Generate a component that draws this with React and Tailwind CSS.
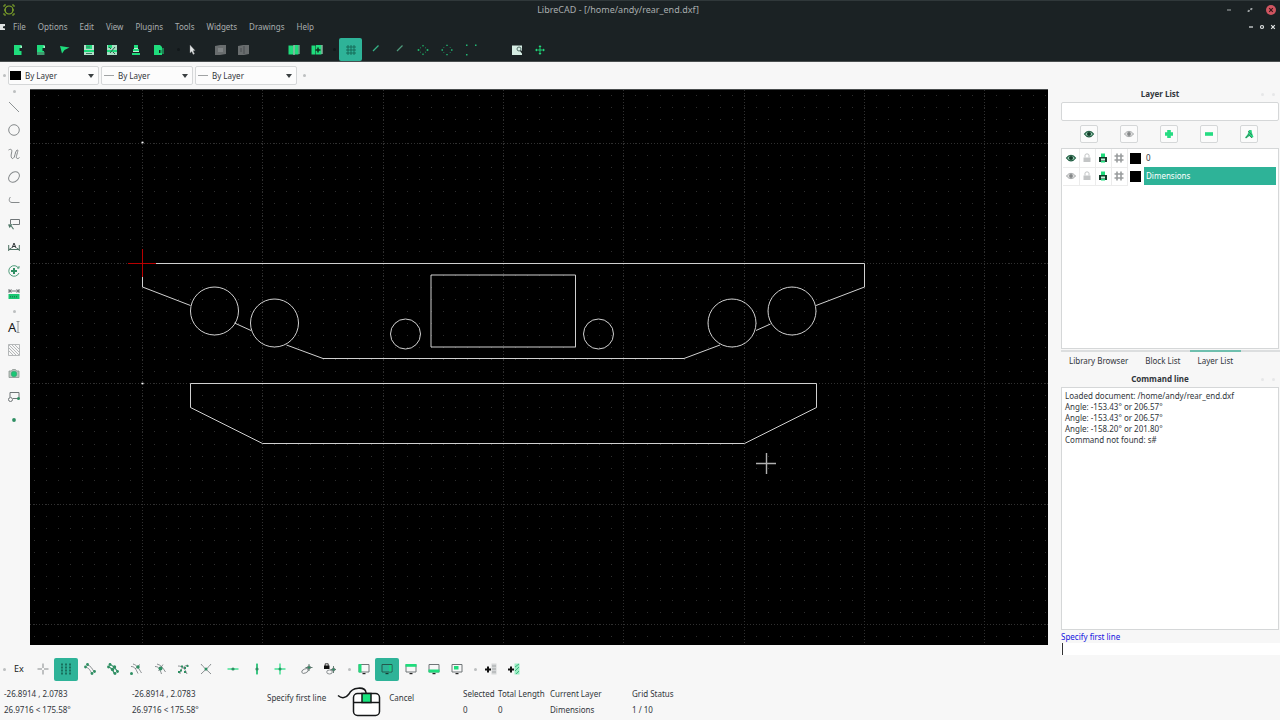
import React, { useState } from 'react';

const G = '#1fdc7c'; // bright green of the toolbar icons
const D = '#2f8f63'; // darker green of the snap icons
const K = '#6f7577'; // outline grey

const icons = {
  newDoc: (
    <g fill={G}>
      <path d="M2 1h7v3H7.500v3H9.500v4H2z" />
      <path d="M8.500 1.500h1.500V4H8.500z" fill="#9ff5c8" />
    </g>
  ),
  newTemplate: (
    <g fill={G}>
      <path d="M2 1h7v3H7.500v3H9v1H2z" />
      <path d="M2 8h7.500v3H2z" fill="#3f9d70" />
      <path d="M8.500 1.500h1.500V4H8.500z" fill="#9ff5c8" />
    </g>
  ),
  open: <path d="M1 2l9.500 1.500L5.500 6 3 9.500z" fill={G} />,
  save: (
    <g>
      <path d="M1 1h10v10H1z" fill="#b4dfca" />
      <path d="M3 1h6v4H3zM1 6h10v2H1z" fill={G} />
      <path d="M4 2v2M6 2v2M3 9.500h6" stroke="#3d7d60" strokeWidth="1" />
    </g>
  ),
  saveAs: (
    <g>
      <path d="M1 1h10v10H1z" fill="#a8dcc3" />
      <path d="M2 1h4v3H2zM1 6h10v2H1z" fill={G} />
      <path d="M4 9l5-6M3 3l2 2M7 8l2 2" stroke="#2c5a45" strokeWidth="1" />
    </g>
  ),
  print: (
    <g fill={G}>
      <path d="M4 1h4v3H4zM3 5h6v2H3z" />
      <path d="M2 9h8v2H2z" />
      <path d="M4 4h4v1H4zM3 7h6v1H3z" fill="#bff0d6" />
    </g>
  ),
  exportDoc: (
    <g>
      <path d="M1 1h6l2 2v3H6v3h3v2H1z" fill={G} />
      <path d="M11 5H8v4h3M8 7h3" stroke={G} fill="none" />
    </g>
  ),
  cursor: <path d="M4 1l5 5.500-2 .3 1.500 3-1.300.700-1.500-3L4 9z" fill="#e3e6e6" stroke="#7d8284" strokeWidth=".4" />,
  undo: (
    <g>
      <path d="M1 2l5-1h6v9l-6 1H1z" fill="#696d6e" />
      <path d="M4 4h5v4H4z" fill="#7f8384" />
    </g>
  ),
  redo: (
    <g>
      <path d="M1 2l5-1h6v9l-5 1H1z" fill="#696d6e" />
      <path d="M7 2v8M4 4v4" stroke="#4a4f50" />
    </g>
  ),
  panes: (
    <g>
      <path d="M.5 1.500h5v9h-5z" fill={G} />
      <path d="M6.500 1h4v9.500h-4z" fill={G} />
      <path d="M6 1v10" stroke="#d6fbe7" />
      <path d="M11 1v9" stroke="#9ad9b9" />
    </g>
  ),
  panesAdd: (
    <g>
      <path d="M.5 1.500h4v9h-4zM5 1h5.500v9.500H5z" fill={G} />
      <path d="M7 3.500v5M4.500 6h5" stroke="#12311f" strokeWidth="1.500" />
      <path d="M11 1v9" stroke="#bff0d6" />
    </g>
  ),
  grid: <path d="M3 1v10M6 1v10M9 1v10M1 3h10M1 6h10M1 9h10" stroke="#12604f" strokeWidth=".8" />,
  lineThin: <path d="M3 7l5.500-5.500" stroke="#35b487" strokeWidth="1.200" />,
  lineThin2: <path d="M3 7l5.500-5.500" stroke="#4f9a7c" strokeWidth="1.200" />,
  zoomIn: <path d="M5 2.200L6 .7l1 1.500zM5 9.800l1 1.500 1-1.500zM.7 5.200h1.600v1.600H.7zM9.700 5.200h1.600v1.600H9.700zM3 3.500h.7v.7H3zM8.300 3.500h.7v.7h-.7zM3 7.800h.7v.7H3zM8.300 7.800h.7v.7h-.7z" fill={G} />,
  zoomOut: <path d="M5.300.700h1.400v1.400H5.300zM5.300 9.900h1.400v1.400H5.300zM.5 5.300h1.500v1.400H.5zM10 5.300h1.500v1.400H10zM2.500 3h.7v.7h-.7zM8.800 3h.7v.7h-.7zM2.500 8.300h.7V9h-.7zM8.800 8.300h.7V9h-.7z" fill="#22b874" />,
  zoomAuto: <path d="M1 .5h1.500V2H1zM10 .5h1.500V2H10zM1 10h1.500v1.500H1z" fill="#22b874" />,
  zoomWindow: (
    <g>
      <path d="M1 1.500h10v9.500H1z" fill="#d5ece3" />
      <circle cx="8" cy="5" r="2" fill="none" stroke="#55706a" />
      <path d="M9.500 6.500l2 2.500" stroke="#1b2224" strokeWidth="1.300" />
    </g>
  ),
  pan: (
    <g>
      <path d="M6 2v8M2 6h8" stroke={G} strokeWidth=".9" />
      <path d="M6 1l1.500 2h-3zM6 11l1.500-2h-3zM1 6l2-1.500v3zM11 6l-2-1.500v3z" fill={G} />
    </g>
  ),

  // left tool column
  line: <path d="M1 1l10 10" stroke="#8d9294" />,
  circle: <circle cx="6" cy="6" r="5.300" fill="none" stroke="#85898b" />,
  spline: <path d="M.5 2C3 .5 4.500 1.500 3.500 5S3.500 11 5 10.500C7.500 9.500 6.500 4 9 2c2.500-1-1.500 6.500-.5 8 .8 1 2.200.5 3-.5" fill="none" stroke="#85898b" />,
  ellipse: <ellipse cx="6" cy="6" rx="6" ry="4.500" fill="none" stroke="#85898b" transform="rotate(-42 6 6)" />,
  polyline: <path d="M2.500 3C.5 5 .8 8.500 4 8.500h7.500" fill="none" stroke="#85898b" />,
  select: (
    <g fill="none" stroke={K}>
      <path d="M2.500 6V1.500h9v5H5" />
      <path d="M0 6.500l5-.5-1.500 1.500L6 11l-1 .5L3 8.500 1.500 10z" fill="#52796a" stroke="none" />
    </g>
  ),
  dimension: (
    <g stroke="#4c6f61" fill="none">
      <path d="M.7 4v6M11.300 4v6M1 8.500h10M1 8.500l2.500-1.500M11 8.500L8.500 7" />
      <path d="M4 7l2-5 2 5M5 5.500h2" stroke="#343a3c" />
    </g>
  ),
  modify: (
    <g fill="none" stroke="#4f9c7b">
      <path d="M10.800 3.500A5.300 5.300 0 1 0 11 8" />
      <path d="M6 3v6M3 6h6" stroke={D} strokeWidth="2" />
      <path d="M9 3h2V1" />
    </g>
  ),
  measure: (
    <g>
      <path d="M1 1v4M11 1v4M1 3h10M1.500 3l2-1.500M1.500 3l2 1.500M10.500 3l-2-1.500M10.500 3l-2 1.500" stroke="#4a5153" fill="none" strokeWidth=".8" />
      <path d="M.5 6h11v5H.5z" fill="#19c772" />
      <path d="M2.500 8v1.500M4.500 8v1.500M6.500 8v1.500M8.500 8v1.500" stroke="#16764a" strokeWidth=".8" />
    </g>
  ),
  hatch: (
    <g fill="none" stroke="#a3a7a8" strokeWidth=".8">
      <path d="M.5.500h11v11H.5z" />
      <path d="M1 7l4 4M1 4l7 7M1 1l10 10M4 1l7 7M7 1l4 4" />
    </g>
  ),
  image: (
    <g>
      <path d="M1 3h2.500l1-1.500h3l1 1.500H11v6.500H1z" fill="#b9c8c0" stroke="#8b9491" strokeWidth=".8" />
      <circle cx="6" cy="6" r="2.800" fill="#18c775" stroke="#3b9c70" strokeWidth=".6" />
    </g>
  ),
  block: (
    <g fill="none" stroke={K}>
      <path d="M2 6V1.500h9v6H5" />
      <circle cx="2.500" cy="8.500" r="2" />
      <circle cx="10.500" cy="7.500" r="1.500" fill={D} stroke="none" />
    </g>
  ),
  point: <circle cx="6" cy="6" r="1.900" fill={D} />,

  // snap bar
  free: <path d="M6 .5V5M6 7v4.500M.5 6H5M7 6h4.500" stroke="#85898b" />,
  snapGrid: <path d="M2 .5v11M6 .5v11M10 .5v11" stroke="#12604f" strokeWidth="1.600" strokeDasharray="2 1" />,
  endpoints: (
    <g>
      <path d="M3.500 2c3.500 1 4 3 6.500 6.500M1.500 4c3 1 4 2 6 6" stroke={K} fill="none" strokeWidth=".8" />
      <circle cx="3.500" cy="1.500" r="1.400" fill={D} />
      <circle cx="1.500" cy="4" r="1.400" fill={D} />
      <circle cx="10.500" cy="8.500" r="1.400" fill={D} />
      <circle cx="8" cy="10.500" r="1.400" fill={D} />
    </g>
  ),
  onEntity: (
    <g fill={D}>
      <path d="M2.500 1.500C6 2 8 5 11 9M1 4c3 0 5 3 6.500 7" stroke={D} fill="none" strokeWidth="1.200" />
      <circle cx="3" cy="1.500" r="1.400" />
      <circle cx="1.500" cy="4" r="1.400" />
      <circle cx="7.500" cy="4" r="1.700" />
      <circle cx="5.500" cy="6.500" r="1.700" />
      <circle cx="10.500" cy="8.500" r="1.400" />
      <circle cx="8" cy="10.500" r="1.400" />
    </g>
  ),
  centerSnap: (
    <g fill="none" stroke={K} strokeWidth=".8">
      <path d="M3 1c4 1 6 5 8.500 9M1 3.500c4 0 5 3 7 7M5 6l5-4.500" />
      <circle cx="1.500" cy="10.500" r="1.500" fill={D} stroke="none" />
      <circle cx="8" cy="4" r="1.700" fill={D} stroke="none" />
    </g>
  ),
  middle: (
    <g fill="none" stroke={K} strokeWidth=".8">
      <path d="M3 1c4 1 6 4 8.500 8M1 3.500c4 0 5 3 6.500 7.500M4.500 8L9 1.500" />
      <circle cx="6.500" cy="5.500" r="2" fill={D} stroke="none" />
    </g>
  ),
  distance: (
    <g>
      <path d="M1 3c5 0 7 3 9 8M3 11c0-4 3-8 8-9" stroke={K} fill="none" strokeWidth=".8" />
      <path d="M4 2.500h2v2H4zM7 4h2v2H7zM3 6.500h2v2H3zM7 8h2v2H7zM1 8h2v2H1zM9.500 2h2v2h-2z" fill={D} />
    </g>
  ),
  intersection: (
    <g>
      <path d="M1 1c2 3 6 6 10 10M11 1C9 4 5 7 1 11" stroke={K} fill="none" strokeWidth=".8" />
      <circle cx="6" cy="6" r="1.500" fill={D} />
    </g>
  ),
  horiz: (
    <g>
      <path d="M.5 6h11" stroke="#48e296" strokeWidth="1.500" />
      <circle cx="6" cy="6" r="1.600" fill={D} />
    </g>
  ),
  vert: (
    <g>
      <path d="M6 .5v11" stroke="#48e296" strokeWidth="2" />
      <path d="M6 1v10" stroke={D} strokeWidth=".7" />
      <circle cx="6" cy="6" r="1.600" fill={D} />
    </g>
  ),
  ortho: (
    <g>
      <path d="M6 .5v11M.5 6h11" stroke="#48e296" strokeWidth="1.500" />
      <circle cx="6" cy="6" r="1.500" fill={D} />
    </g>
  ),
  relZero: (
    <g fill="none" stroke={K} strokeWidth=".8">
      <ellipse cx="4" cy="8" rx="3.500" ry="2" transform="rotate(-25 4 8)" />
      <path d="M8 1v7M4.500 4.500h7" stroke="#3c5f50" />
      <circle cx="8" cy="4.500" r="1.600" fill={D} />
    </g>
  ),
  lockZero: (
    <g fill="none" stroke={K} strokeWidth=".8">
      <path d="M0 2.500h5.500V6H0z" fill="#111" stroke="none" />
      <path d="M1.200 3V.8h3V3" stroke="#111" />
      <ellipse cx="5.500" cy="9" rx="2.800" ry="2" />
      <path d="M9.500 3v7M6.500 6.500H12" stroke="#3c5f50" />
      <circle cx="9.500" cy="6.500" r="1.500" fill={D} />
    </g>
  ),
  dockLeft: (
    <g>
      <path d="M1 1.500h10v7.500H1z" fill="none" stroke={K} />
      <path d="M.5 1h3v8.500h-3z" fill={G} />
      <path d="M4.500 10h3v1.200h-3z" fill="#222" />
    </g>
  ),
  dockRight: (
    <g>
      <path d="M1 1.500h10v7.500H1z" fill="none" stroke="#24594d" />
      <path d="M8 2h2.500v6.500H8z" fill="#1ccf88" />
      <path d="M4.500 10h3v1.200h-3z" fill="#143b33" />
    </g>
  ),
  dockTop: (
    <g>
      <path d="M1 1.500h10v7.500H1z" fill="none" stroke={K} />
      <path d="M.5 1h11v2.800H.5z" fill={G} />
      <path d="M4.500 10h3v1.200h-3z" fill="#222" />
    </g>
  ),
  dockBottom: (
    <g>
      <path d="M1 1.500h10v7.500H1z" fill="none" stroke={K} />
      <path d="M.5 6.500h11v3H.5z" fill={G} />
      <path d="M4.500 10h3v1.200h-3z" fill="#222" />
    </g>
  ),
  dockFloat: (
    <g>
      <path d="M1 1.500h10v7.500H1z" fill="none" stroke={K} />
      <path d="M3 3h4.500v3.500H3z" fill={G} />
      <path d="M4.500 10h3v1.200h-3z" fill="#222" />
    </g>
  ),
  addBar: (
    <g>
      <path d="M6.500.500h5v11h-5z" fill="#d4d6d7" />
      <path d="M7 3h4M7 6h4M7 9h4" stroke="#a3a7a8" />
      <path d="M3 3.500v6M0 6.500h6" stroke="#111" strokeWidth="2" />
    </g>
  ),
  addMenu: (
    <g>
      <path d="M6.500.500h5v11h-5z" fill="#9aeec4" />
      <path d="M7 4l4-3M7 8l4-4M8 11l3-3" stroke="#3eb67f" />
      <path d="M3 3.500v6M0 6.500h6" stroke="#111" strokeWidth="2" />
    </g>
  ),

  // layer list
  eye: (
    <g>
      <path d="M1.500 6c2.500-3.700 6.500-3.700 9 0-2.500 3.700-6.500 3.700-9 0z" fill="#9bd0b6" stroke="#1e5b40" strokeWidth="1.200" />
      <circle cx="6" cy="6" r="2" fill="#123d2a" />
    </g>
  ),
  eyeOff: (
    <g>
      <path d="M1.500 6c2.500-3.500 6.500-3.500 9 0-2.500 3.500-6.500 3.500-9 0z" fill="#ddd" stroke="#a5a8a9" />
      <circle cx="6" cy="6" r="1.900" fill="#858889" />
    </g>
  ),
  plus: <path d="M4.200 2h3.600v2.200H10v3.600H7.800V10H4.200V7.800H2V4.200h2.200z" fill="#25dc82" />,
  minus: <path d="M2 4.200h8v3.600H2z" fill="#25dc82" />,
  edit: (
    <g>
      <path d="M6 2h2.500l.5 3 1.500 4-2 1-2-2L3 10.500l-1-1 2.500-3z" fill="#27d580" />
      <path d="M5 3l4 4M6 7l3 3M3 10l3-4" stroke="#3f6d57" strokeWidth=".8" />
    </g>
  ),
  lock: (
    <g>
      <path d="M2.500 5.500h7V10h-7z" fill="#c3c5c6" />
      <path d="M4 5.500V3c0-1.500 4-1.500 4 0v2.500" stroke="#c3c5c6" fill="none" />
    </g>
  ),
  printer: (
    <g>
      <path d="M4 1.500h4V5H4z" fill={G} />
      <path d="M2 5h8v5H2z" fill="#143b2a" />
      <path d="M4 6.500h4v2H4z" fill="#c8f6de" />
      <path d="M4 9h4v1.500H4z" fill={G} />
    </g>
  ),
  hash: <path d="M4 1.500v9M8 1.500v9M1.500 4h9M1.500 8h9" stroke="#9a9d9e" strokeWidth="1.600" />,
};

function Icon({ name }) {
  return (
    <svg viewBox="0 0 12 12" className="w-3 h-3 shrink-0" aria-hidden="true">
      {icons[name]}
    </svg>
  );
}

function Tool({ name, active, children }) {
  return (
    <button
      aria-label={name}
      className={`flex flex-1 items-center justify-center rounded-xs ${active ? 'bg-[#2eb398]' : ''}`}
    >
      {children || <Icon name={name} />}
    </button>
  );
}

function Dot({ className }) {
  return <span className={`w-[3px] h-[3px] shrink-0 rounded-full ${className}`} />;
}

function Combo({ label, width, swatch }) {
  return (
    <label className={`relative flex items-center h-[19px] rounded-xs border border-[#d5d7d8] bg-[#fcfcfc] ${width}`}>
      {swatch ? (
        <span className="ml-px w-[11px] h-[9px] bg-black" />
      ) : (
        <span className="ml-0.5 w-[10px] h-px bg-[#a0a3a4]" />
      )}
      <select aria-label={label} className="ml-1 flex-1 appearance-none bg-transparent outline-none">
        <option>By Layer</option>
      </select>
      <svg viewBox="0 0 6 4" className="absolute right-1 w-1.5 h-1 pointer-events-none">
        <path d="M0 0h6L3 4z" fill="#3b4042" />
      </svg>
    </label>
  );
}

const menus = ['File', 'Options', 'Edit', 'View', 'Plugins', 'Tools', 'Widgets', 'Drawings', 'Help'];

function Header() {
  return (
    <header className="bg-[#1b2224] text-[#a9aeaf] border-b border-[#4a4f50]">
      <div className="relative flex h-[18px] items-center justify-center border-t border-[#30383a] pr-11">
        <h1 className="text-[9px]">LibreCAD - [/home/andy/rear_end.dxf]</h1>
        <svg viewBox="0 0 12 12" className="absolute left-[3px] w-3 h-3">
          <path d="M1 3V1h2M9 1h2v2M11 9v2H9M3 11H1V9M1 6h2M9 6h2" stroke="#82a82a" fill="none" />
          <circle cx="6" cy="6" r="4" stroke="#82a82a" fill="none" strokeWidth="1.200" />
        </svg>
        <div className="absolute right-1 flex items-center gap-[11px]">
          <button aria-label="Minimize" className="w-[10px] h-[10px]">
            <svg viewBox="0 0 10 10"><path d="M3 5h4" stroke="#a9aeaf" /></svg>
          </button>
          <button aria-label="Restore" className="w-[10px] h-[10px]">
            <svg viewBox="0 0 10 10">
              <path d="M3 4.500L2.500 7l2.500-.5zM5 3.500L7.500 3 7 5.500z" fill="#a9aeaf" />
              <path d="M3 7l4-4" stroke="#a9aeaf" strokeWidth=".7" />
            </svg>
          </button>
          <button aria-label="Close" className="w-[10px] h-[10px] rounded-full bg-[#cf5560]">
            <svg viewBox="0 0 10 10"><path d="M3.200 3.200l3.600 3.600M6.800 3.200L3.200 6.800" stroke="#3a1418" strokeWidth="1.200" /></svg>
          </button>
        </div>
      </div>
      <div className="flex h-[18px] items-center">
        <svg viewBox="0 0 6 8" className="w-1.5 h-2">
          <path d="M0 1h5v6H0z" fill="#dfe2e2" />
          <path d="M5 3L3 3.500v1.500L5 5.500z" fill="#1b2224" />
        </svg>
        <nav className="ml-[7px] flex gap-3">
          {menus.map((m) => (
            <button key={m}>{m}</button>
          ))}
        </nav>
        <div className="ml-auto mr-[3px] flex gap-[3px]">
          <button aria-label="Minimize document" className="w-2 h-2">
            <svg viewBox="0 0 8 8"><path d="M2 4h4" stroke="#e3e6e6" strokeWidth="1.200" /></svg>
          </button>
          <button aria-label="Restore document" className="w-2 h-2">
            <svg viewBox="0 0 8 8"><circle cx="4" cy="4" r="1.500" stroke="#e3e6e6" fill="none" strokeWidth="1.200" /></svg>
          </button>
          <button aria-label="Close document" className="w-2 h-2">
            <svg viewBox="0 0 8 8"><path d="M2.200 2.200l3.600 3.600M5.800 2.200L2.200 5.800" stroke="#e3e6e6" strokeWidth="1.200" /></svg>
          </button>
        </div>
      </div>
      <div className="flex h-[25px] items-center pl-1.5 pt-0.5">
        <div className="flex h-[23px] w-[165px]">
          {['newDoc', 'newTemplate', 'open', 'save', 'saveAs', 'print', 'exportDoc'].map((n) => <Tool key={n} name={n} />)}
        </div>
        <Dot className="ml-1.5 bg-[#12181a]" />
        <div className="flex h-[23px] w-6"><Tool name="cursor" /></div>
        <div className="ml-1 flex h-[23px] w-[47px]">
          <Tool name="undo" />
          <Tool name="redo" />
        </div>
        <div className="ml-[27px] flex h-[23px] w-[47px]">
          <Tool name="panes" />
          <Tool name="panesAdd" />
        </div>
        <Dot className="ml-1 mr-[3px] bg-[#12181a]" />
        <div className="flex h-[23px] w-[23px]"><Tool name="grid" active /></div>
        <div className="ml-0.5 flex h-[23px] w-[119px]">
          {['lineThin', 'lineThin2', 'zoomIn', 'zoomOut', 'zoomAuto'].map((n) => <Tool key={n} name={n} />)}
        </div>
        <div className="ml-[22px] flex h-[23px] w-[47px]">
          <Tool name="zoomWindow" />
          <Tool name="pan" />
        </div>
      </div>
    </header>
  );
}

function ToolColumn() {
  return (
    <div className="flex w-[30px] shrink-0 flex-col items-center pr-0.5 pt-px">
      <Dot className="bg-[#bcbfc0]" />
      <div className="mt-0.5 flex h-[211px] w-[23px] flex-col">
        {['line', 'circle', 'spline', 'ellipse', 'polyline', 'select', 'dimension', 'modify', 'measure'].map((n) => (
          <Tool key={n} name={n} />
        ))}
      </div>
      <Dot className="mt-1 bg-[#bcbfc0]" />
      <div className="mt-0.5 flex h-[117px] w-[23px] flex-col">
        <Tool name="text">
          <svg viewBox="0 0 12 12" className="w-3 h-3 overflow-visible">
            <text x="0" y="10.500" fontSize="13" fill="#17191a" className="font-[Noto_Sans,sans-serif]">A</text>
            <path d="M8.500.500h3M8.500 11.500h3M10 .5v11" stroke="#85898b" strokeWidth=".9" />
          </svg>
        </Tool>
        {['hatch', 'image', 'block', 'point'].map((n) => <Tool key={n} name={n} />)}
      </div>
    </div>
  );
}

// grid geometry: origin of the drawing and size of one minor step
const ORIGIN = { x: 142, y: 263 };
const STEP = 12.035;

function gridPaths() {
  let dots = '';
  const cols = [];
  const rows = [];
  for (let i = -9; i <= 75; i++) {
    const x = Math.round(ORIGIN.x + i * STEP);
    if (i % 10 === 0) cols.push(x);
    for (let j = -14; j <= 31; j++) {
      const y = Math.round(ORIGIN.y + j * STEP);
      dots += `M${x} ${y + 0.5}h1`;
    }
  }
  for (let j = -10; j <= 31; j += 10) rows.push(Math.round(ORIGIN.y + j * STEP));
  return { dots, cols, rows };
}

const { dots, cols, rows } = gridPaths();

const circles = [
  [214.5, 311, 24],
  [274.5, 323, 24],
  [405.5, 334, 15],
  [598.5, 334, 15],
  [732, 323, 24],
  [792, 311, 24],
];

function Canvas() {
  return (
    <main className="min-w-0 flex-1 overflow-hidden bg-black mb-3 border-t border-[#4a4d4e]">
      <svg viewBox="30 90 1018 555" preserveAspectRatio="xMinYMin slice" className="block w-full h-full" role="img" aria-label="Drawing">
        <path d={dots} stroke="#2e2e2e" />
        <g stroke="#303030" strokeDasharray="1 2">
          {cols.map((x) => <path key={x} d={`M${x + 0.5} 90v600`} />)}
          {rows.map((y) => <path key={y} d={`M30 ${y + 0.5}h1100`} />)}
        </g>
        <g fill="none" stroke="#d0d0d0">
          <path d="M142.500 277V287L190.500 305.500M234.500 323L251 330.500M286.500 345L323 358.500H684L720 345M756 330.500L770.500 324M816 305.500L864.500 287V263.500H156" />
          <path d="M431 275h144.500v72H431z" />
          <path d="M190.500 383.500h626v24l-72 36h-482l-72-36z" />
          {circles.map(([x, y, r]) => <circle key={x} cx={x} cy={y} r={r} />)}
        </g>
        <path d="M128 263h28v1h-28z" fill="#b80000" />
        <path d="M142 249h1v28h-1z" fill="#b80000" />
        <path d="M141.500 142.500h2M141.500 383.500h2" stroke="#fff" strokeWidth="1.500" />
        <path d="M756 463.500h20M766.500 453v21" stroke="#b0b0b0" strokeWidth="1.400" />
      </svg>
    </main>
  );
}

const layers = [
  { name: '0', visible: true },
  { name: 'Dimensions', visible: false },
];

const log = [
  'Loaded document: /home/andy/rear_end.dxf',
  'Angle: -153.43° or 206.57°',
  'Angle: -153.43° or 206.57°',
  'Angle: -158.20° or 201.80°',
  'Command not found: s#',
];

function DockTitle({ children }) {
  return (
    <div className="relative flex h-[10px] items-center justify-center pr-5">
      <h2 className="font-bold">{children}</h2>
      <div className="absolute right-1 flex gap-2">
        <Dot className="bg-[#e6e7e8]" />
        <Dot className="bg-[#e6e7e8]" />
      </div>
    </div>
  );
}

function Dock() {
  const [selected, setSelected] = useState('Dimensions');

  return (
    <aside className="flex w-[232px] shrink-0 flex-col pl-[13px] pb-0.5">
      <div className="flex flex-col pr-px">
        <DockTitle>Layer List</DockTitle>
        <input aria-label="Filter layers" className="mt-[3px] h-[19px] rounded-xs border border-[#d5d7d8] bg-white px-1 outline-none" />
        <div className="mt-1 flex pl-2 pr-[10px]">
          {['eye', 'eyeOff', 'plus', 'minus', 'edit'].map((n) => (
            <div key={n} className="flex flex-1 justify-center">
              <button aria-label={n} className="flex h-[18px] w-[18px] items-center justify-center rounded-xs border border-[#d5d7d8] bg-[#fbfbfb]">
                <Icon name={n} />
              </button>
            </div>
          ))}
        </div>
        <div className="mt-[5px] h-[201px] border border-[#d5d7d8] bg-white pl-px pr-0.5">
          <table className="w-full border-collapse">
            <tbody>
              {layers.map((l) => (
                <tr key={l.name} className="h-[18px]" onClick={() => setSelected(l.name)}>
                  {[l.visible ? 'eye' : 'eyeOff', 'lock', 'printer', 'hash'].map((n) => (
                    <td key={n} className="w-4 border-r border-b border-[#ececec] p-0">
                      <div className="flex justify-center"><Icon name={n} /></div>
                    </td>
                  ))}
                  <td className="w-[17px] p-0">
                    <div className="mx-auto w-[11px] h-[11px] bg-black" />
                  </td>
                  <td className={`py-0 pl-0.5 ${selected === l.name ? 'bg-[#2eb398] text-white' : ''}`}>{l.name}</td>
                </tr>
              ))}
            </tbody>
          </table>
        </div>
      </div>
      <div role="tablist" className="mt-px flex h-[19px] border-t-2 border-[#dcdedf]">
        <button role="tab" className="px-2">Library Browser</button>
        <button role="tab" className="px-[9px]">Block List</button>
        <button role="tab" aria-selected="true" className="-mt-0.5 border-t-2 border-[#6fbfae] px-2">Layer List</button>
      </div>
      <div className="mt-[5px] pr-px">
        <DockTitle>Command line</DockTitle>
      </div>
      <div className="mt-[3px] mr-px flex-1 border border-[#d5d7d8] bg-white px-[3px] pt-0.5 leading-[11px]">
        {log.map((l, i) => (
          <p key={i}>{l}</p>
        ))}
      </div>
      <label htmlFor="cmd" className="h-[13px] leading-[13px] text-[#1414e0]">Specify first line</label>
      <div className="h-3 bg-white pl-px">
        <input id="cmd" className="block h-full w-full border-l border-[#333] bg-white outline-none" />
      </div>
    </aside>
  );
}

function SnapBar() {
  return (
    <div className="flex h-[24px] items-center pl-[3px]">
      <Dot className="bg-[#bcbfc0]" />
      <div className="ml-px flex h-[23px] w-[71px]">
        <Tool name="exclusive"><span className="text-[9px] text-[#17191a]">Ex</span></Tool>
        <Tool name="free" />
        <Tool name="snapGrid" active />
      </div>
      <div className="flex h-[23px] w-[140px]">
        {['endpoints', 'onEntity', 'centerSnap', 'middle', 'distance', 'intersection'].map((n) => <Tool key={n} name={n} />)}
      </div>
      <div className="ml-[3px] flex h-[23px] w-[71px]">
        {['horiz', 'vert', 'ortho'].map((n) => <Tool key={n} name={n} />)}
      </div>
      <div className="ml-[3px] flex h-[23px] w-[47px]">
        <Tool name="relZero" />
        <Tool name="lockZero" />
      </div>
      <Dot className="ml-[6px] bg-[#bcbfc0]" />
      <div className="ml-px flex h-[23px] w-[117px]">
        <Tool name="dockLeft" />
        <Tool name="dockRight" active />
        <Tool name="dockTop" />
        <Tool name="dockBottom" />
        <Tool name="dockFloat" />
      </div>
      <Dot className="ml-[5px] bg-[#bcbfc0]" />
      <div className="ml-0.5 flex h-[23px] w-[47px]">
        <Tool name="addBar" />
        <Tool name="addMenu" />
      </div>
    </div>
  );
}

function Pair({ top, bottom, className }) {
  return (
    <div className={`shrink-0 whitespace-nowrap leading-4 ${className}`}>
      <p>{top}</p>
      <p>{bottom}</p>
    </div>
  );
}

function StatusBar() {
  return (
    <footer className="flex h-[39px] items-start pl-1 pt-[5px]">
      <Pair className="w-32" top="-26.8914 , 2.0783" bottom="26.9716 < 175.58°" />
      <Pair className="w-[135px]" top="-26.8914 , 2.0783" bottom="26.9716 < 175.58°" />
      <div className="flex h-6 w-[196px] items-center">
        <span>Specify first line</span>
        <svg viewBox="0 0 44 32" className="ml-[11px] mt-2 w-11 h-8">
          <g fill="none" stroke="#151718" strokeWidth="1.500">
            <path d="M1 9.500c4 3.500 8 2.500 11-1.500 3-7 16-8 17-1.500v1" />
            <rect x="16.500" y="7.500" width="26" height="22" rx="4" fill="#fff" />
            <path d="M16.500 16.500h26" />
            <path d="M25 7.500h9v9h-9z" fill="#18e57e" />
          </g>
        </svg>
        <span className="ml-2">Cancel</span>
      </div>
      <Pair className="w-[35px]" top="Selected" bottom="0" />
      <Pair className="w-[52px]" top="Total Length" bottom="0" />
      <Pair className="w-[82px]" top="Current Layer" bottom="Dimensions" />
      <Pair className="" top="Grid Status" bottom="1 / 10" />
    </footer>
  );
}

function App() {
  return (
    <div className="flex h-screen flex-col overflow-hidden bg-[#f7f7f7] font-[Noto_Sans,sans-serif] text-[8px] leading-[10px] text-[#31363b]">
      <Header />
      <div className="flex h-[27px] shrink-0 items-center gap-0.5 pl-[3px]">
        <Dot className="bg-[#bcbfc0]" />
        <Combo label="Color" width="w-[91px]" swatch />
        <Combo label="Line width" width="w-[92px]" />
        <Combo label="Line type" width="w-[102px]" />
        <Dot className="ml-1 bg-[#bcbfc0]" />
      </div>
      <div className="flex min-h-0 flex-1">
        <ToolColumn />
        <Canvas />
        <Dock />
      </div>
      <SnapBar />
      <StatusBar />
    </div>
  );
}

export default App;
